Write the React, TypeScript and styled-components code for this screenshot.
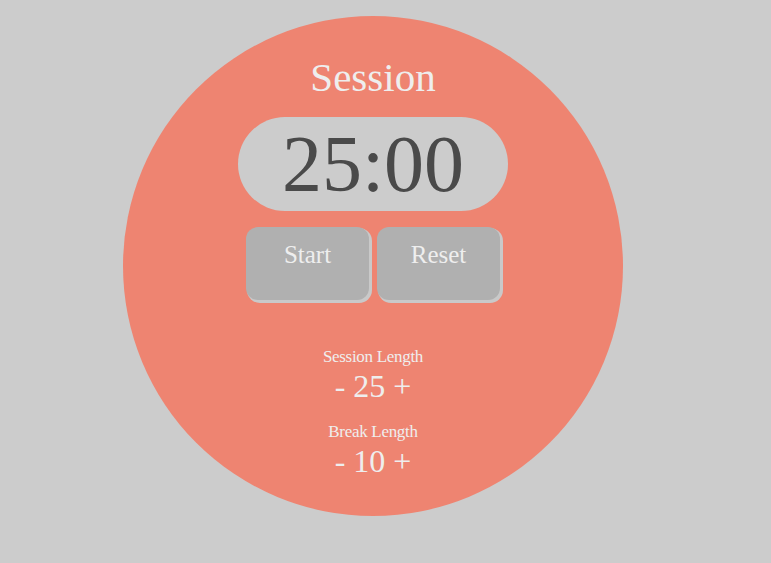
import React from "react";
import styled, { createGlobalStyle } from "styled-components";

const Global = createGlobalStyle`
  html, body { margin: 0; padding: 0; background: #cccccc; }
  body { font-family: "Liberation Serif", "Times New Roman", serif; }
`;

const Page = styled.div`
  padding: 16px 0 0 123px;
  height: 547px;
`;

const Circle = styled.div`
  width: 500px;
  height: 500px;
  border-radius: 50%;
  background: #ee8471;
  display: flex;
  flex-direction: column;
  align-items: center;
  box-sizing: border-box;
  padding-top: 36px;
`;

const Title = styled.h1`
  margin: 0;
  font-family: "Liberation Serif", serif;
  font-weight: normal;
  font-size: 41px;
  line-height: 50px;
  color: #eeeeee;
`;

const Display = styled.div`
  margin-top: 15px;
  width: 270px;
  height: 94px;
  border-radius: 47px;
  background: #cccccc;
  color: #4a4a4a;
  font-size: 80px;
  line-height: 94px;
  text-align: center;
`;

const Controls = styled.div`
  margin-top: 16px;
  display: flex;
  gap: 8px;
`;

const Button = styled.button`
  width: 123px;
  height: 73px;
  border: none;
  border-radius: 12px;
  background: #b0b0b0;
  box-shadow: 2px 2px 0 1px #c9c9c9;
  color: #eeeeee;
  font-family: "Liberation Serif", serif;
  font-size: 25px;
  padding: 14px 0 0;
  display: flex;
  justify-content: center;
  align-items: flex-start;
`;

const Settings = styled.div`
  margin-top: 46px;
  display: flex;
  flex-direction: column;
  align-items: center;
  gap: 17px;
`;

const Setting = styled.div`
  display: flex;
  flex-direction: column;
  align-items: center;
  color: #eeeeee;
`;

const Label = styled.div`
  font-size: 17px;
  line-height: 22px;
  letter-spacing: -0.3px;
`;

const Value = styled.div`
  font-size: 32px;
  line-height: 36px;
`;

export default function App() {
  return (
    <>
      <Global />
      <Page>
        <Circle>
          <Title>Session</Title>
          <Display>25:00</Display>
          <Controls>
            <Button>Start</Button>
            <Button>Reset</Button>
          </Controls>
          <Settings>
            <Setting>
              <Label>Session Length</Label>
              <Value>- 25 +</Value>
            </Setting>
            <Setting>
              <Label>Break Length</Label>
              <Value>- 10 +</Value>
            </Setting>
          </Settings>
        </Circle>
      </Page>
    </>
  );
}
